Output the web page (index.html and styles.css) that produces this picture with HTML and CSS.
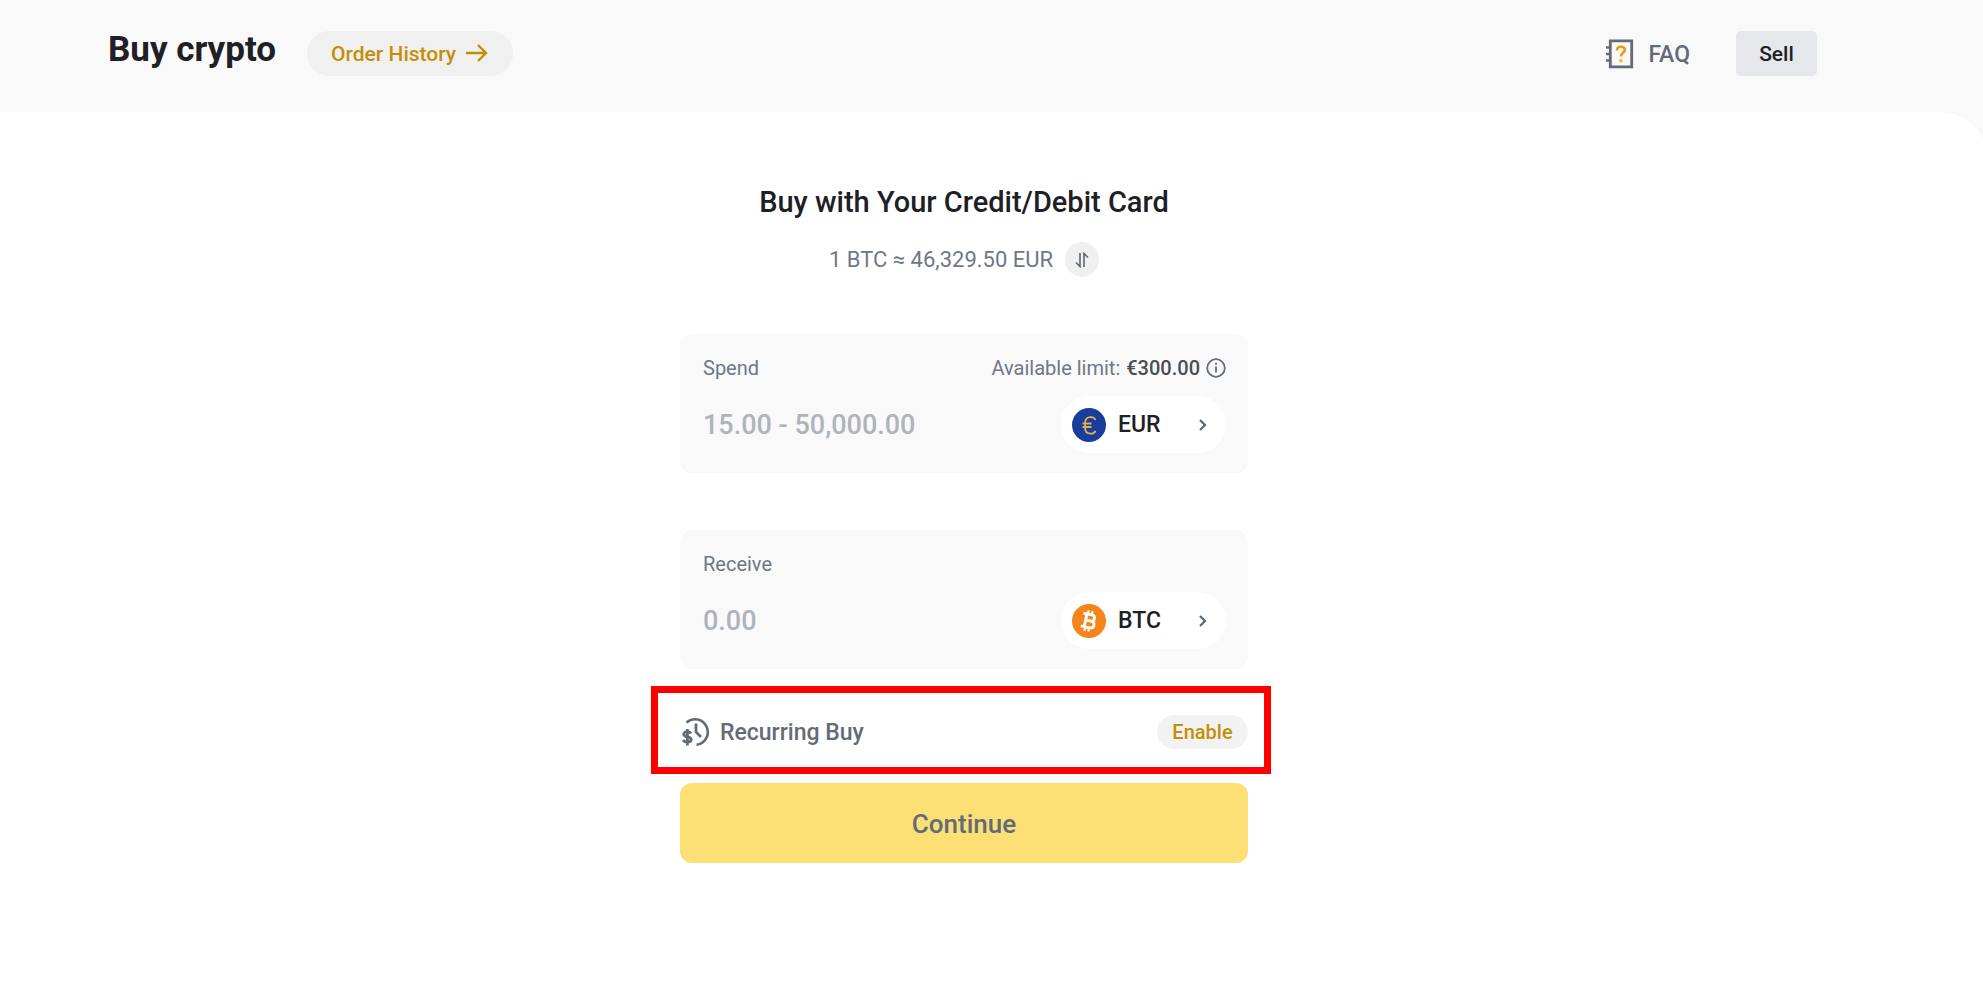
FILE: index.html
```html
<!DOCTYPE html>
<html lang="en">
<head>
    <meta charset="UTF-8">
    <meta name="viewport" content="width=device-width, initial-scale=1.0">
    <title>Buy crypto</title>
    <link rel="stylesheet" href="styles.css">
</head>
<body>
    <header class="header">
        <h1>Buy crypto</h1>
        <a class="history" href="#">
            Order History
            <svg width="24" height="20" viewBox="0 0 24 20" fill="none" stroke="currentColor" stroke-width="2.4">
                <path d="M1 9h20M13 1l8 8-8 8"/>
            </svg>
        </a>
        <a class="faq" href="#">
            <svg width="28" height="30" viewBox="0 0 28 30" fill="none">
                <path d="M4.3 1.8h21.4v26H4.3z" stroke="#636b78" stroke-width="2.8"/>
                <path d="M0 8.5h4M0 15h4M0 21.5h4" stroke="#636b78" stroke-width="2.4"/>
                <path d="M11 11.5V11c0-2 1.600-3.300 3.900-3.300s3.900 1.300 3.900 3.300c0 2.900-3.900 2.900-3.900 6.600" stroke="#f09a10" stroke-width="2.6"/>
                <path d="M13.400 20.300h3v3h-3z" fill="#f0b90b"/>
            </svg>
            FAQ
        </a>
        <button class="sell" type="button">Sell</button>
    </header>
    <main class="main">
        <form class="form">
            <h2>Buy with Your Credit/Debit Card</h2>
            <div class="rate">
                <span>1 BTC ≈ 46,329.50 EUR</span>
                <button class="swap" type="button" aria-label="Swap">
                    <svg width="14" height="16" viewBox="0 0 14 16" fill="none" stroke="#5d6673" stroke-width="1.6">
                        <path d="M5 1v13.500L1 10.500M9 15V1.500l4 4"/>
                    </svg>
                </button>
            </div>
            <div class="card">
                <div class="row">
                    <label for="spend">Spend</label>
                    <span class="limit">Available limit: <b>€300.00</b>
                        <svg width="20" height="20" viewBox="0 0 20 20" fill="none" stroke="#636b78" stroke-width="1.8">
                            <circle cx="10" cy="10" r="8.8"/>
                            <path d="M10 8.500v6M10 4.800v2"/>
                        </svg>
                    </span>
                </div>
                <div class="row">
                    <input id="spend" type="text" placeholder="15.00 - 50,000.00">
                    <button class="coin" type="button">
                        <svg width="34" height="34" viewBox="0 0 34 34" fill="none">
                            <circle cx="17" cy="17" r="17" fill="#1a3c9c"/>
                            <path d="M23.500 12c-.8-1.900-2.300-2.800-4.500-2.800h-.8c-3.200 0-5 1.900-5 5v6.400c0 3.100 1.800 5 5 5h.8c2.200 0 3.700-.9 4.500-2.800M10.500 15.500h9M10.500 19h9" stroke="#e0b24c" stroke-width="1.8"/>
                        </svg>
                        <span>EUR</span>
                        <svg class="arrow" width="8" height="12" viewBox="0 0 8 12" fill="none" stroke="#5d6673" stroke-width="2.2">
                            <path d="M1 1l5 5-5 5"/>
                        </svg>
                    </button>
                </div>
            </div>
            <div class="card">
                <div class="row">
                    <label for="receive">Receive</label>
                </div>
                <div class="row">
                    <input id="receive" type="text" placeholder="0.00">
                    <button class="coin" type="button">
                        <svg width="34" height="34" viewBox="0 0 34 34" fill="none">
                            <circle cx="17" cy="17" r="17" fill="#f5841a"/>
                            <g transform="rotate(12 17 17)" stroke="#fff" stroke-width="2.8">
                                <path d="M13.500 10.500v13M10 10.500h8.500c4.500 0 4.500 6.200 0 6.200h-5M18 16.700h1c5 0 5 6.800 0 6.800h-9"/>
                                <path d="M14.500 6.500v4M18.500 6.500v4M14.500 23.500v4M18.500 23.500v4" stroke-width="2.2"/>
                            </g>
                        </svg>
                        <span>BTC</span>
                        <svg class="arrow" width="8" height="12" viewBox="0 0 8 12" fill="none" stroke="#5d6673" stroke-width="2.2">
                            <path d="M1 1l5 5-5 5"/>
                        </svg>
                    </button>
                </div>
            </div>
            <div class="recurring">
                <svg width="30" height="30" viewBox="0 0 30 30" fill="none" stroke="#636b78" stroke-width="2.6">
                    <path d="M5.500 5.500A12.800 12.800 0 1 1 15.500 27.800"/>
                    <path d="M15 6.500v8.500l5 5" stroke-width="2.8"/>
                    <path d="M10 16.500c-.8-1.300-2-1.800-3.800-1.800-2 0-3.400.9-3.400 2.500 0 3.800 7.400 1.500 7.400 5.300 0 1.700-1.500 2.700-3.700 2.700-1.900 0-3.400-.6-4.500-2M6.400 12v16.500" stroke-width="2.8"/>
                </svg>
                <span>Recurring Buy</span>
                <button class="enable" type="button">Enable</button>
            </div>
            <button class="continue" type="submit">Continue</button>
        </form>
    </main>
</body>
</html>
```
FILE: styles.css
```css
*{
    margin: 0;
    padding: 0;
    box-sizing: border-box;
}
body{
    min-height: 100vh;
    display: flex;
    flex-direction: column;
    overflow-x: hidden;
    background-color: #f9f9f9;
    color: #1e2026;
    font-family: Roboto, "Liberation Sans", sans-serif;
}
a{
    text-decoration: none;
}
svg{
    flex: none;
}
button{
    padding-top: 2px;
    border: none;
    font-family: inherit;
    font-weight: 500;
    color: inherit;
    cursor: pointer;
}
/* header */
.header{
    display: flex;
    align-items: center;
    height: 112px;
    padding: 0 166px 6px 108px;
}
.header h1{
    margin-right: 31px;
    padding-bottom: 6px;
    font-size: 35px;
    line-height: 40px;
    font-weight: 700;
}
.history{
    display: flex;
    align-items: center;
    gap: 9px;
    height: 45px;
    padding: 2px 24px 0;
    border-radius: 23px;
    background-color: #f0f0f0;
    color: #c38f08;
    font-size: 21px;
    font-weight: 500;
}
.faq{
    display: flex;
    align-items: center;
    gap: 14px;
    margin-left: auto;
    margin-right: 46px;
    padding-top: 2px;
    color: #636b78;
    font-size: 23px;
    font-weight: 500;
}
.sell{
    width: 81px;
    height: 45px;
    border-radius: 5px;
    background-color: #e6e7ea;
    font-size: 21px;
}
/* white sheet, runs a little past the right edge */
.main{
    flex: 1;
    margin-right: -5px;
    padding: 70px 169px 40px 109px;
    border-top-right-radius: 48px;
    background-color: #fff;
}
.form{
    max-width: 568px;
    margin: 0 auto;
}
.form h2{
    font-size: 29px;
    line-height: 40px;
    font-weight: 500;
    text-align: center;
}
.rate{
    display: flex;
    justify-content: center;
    align-items: center;
    gap: 12px;
    margin: 20px 0 57px;
    color: #707785;
    font-size: 22px;
}
.swap{
    display: flex;
    justify-content: center;
    align-items: center;
    width: 34px;
    height: 35px;
    padding: 0;
    border-radius: 50%;
    background-color: #f0f0f0;
}
.card{
    height: 139px;
    padding: 20px 22px 0 23px;
    border-radius: 12px;
    background-color: #f9f9f9;
}
.card + .card{
    margin-top: 57px;
}
.row{
    display: flex;
    justify-content: space-between;
    align-items: center;
}
.row label, .limit{
    color: #707785;
    font-size: 20px;
    line-height: 28px;
}
.limit{
    display: flex;
    align-items: center;
    gap: 6px;
}
.limit b{
    color: #474d57;
    font-weight: 500;
}
.row + .row{
    margin-top: 14px;
}
.row input{
    flex: 1;
    min-width: 0;
    border: none;
    outline: none;
    background: none;
    font-family: inherit;
    font-size: 27px;
    font-weight: 500;
    color: #1e2026;
}
.row input::placeholder{
    color: #aeb4bc;
}
.coin{
    display: flex;
    align-items: center;
    gap: 12px;
    width: 165px;
    height: 57px;
    padding: 0 19px 0 11px;
    border-radius: 29px;
    background-color: #fff;
    font-size: 23px;
}
.coin .arrow{
    margin-left: auto;
}
/* highlighted row */
.recurring{
    display: flex;
    align-items: center;
    gap: 9px;
    height: 88px;
    margin: 17px -23px 9px -29px;
    padding: 4px 16px 0 23px;
    border: 7px solid #f00;
    color: #636b78;
    font-size: 23px;
    font-weight: 500;
}
.enable{
    margin-left: auto;
    width: 91px;
    height: 34px;
    padding: 0;
    border-radius: 17px;
    background-color: #f2f2f2;
    color: #c38f08;
    font-size: 20px;
}
.continue{
    display: block;
    width: 100%;
    height: 80px;
    border-radius: 12px;
    background-color: #fce076;
    color: #636b78;
    font-size: 26px;
}
```
